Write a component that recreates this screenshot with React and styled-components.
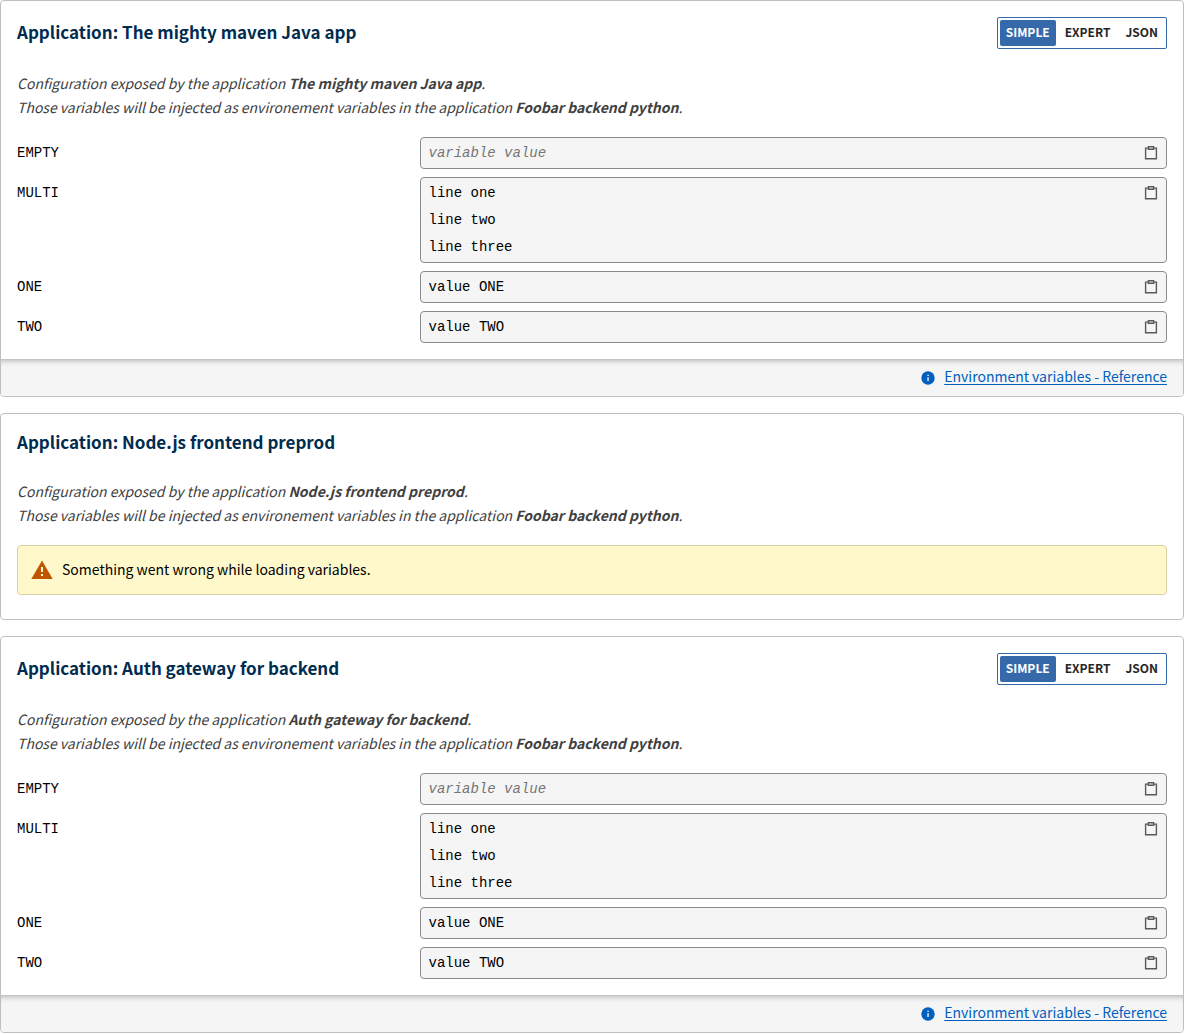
import React, { useId, useState } from 'react';
import styled, { createGlobalStyle } from 'styled-components';

const SANS = '"Noto Sans CJK JP", "Noto Sans", sans-serif';
const MONO = '"Liberation Mono", "DejaVu Sans Mono", monospace';

const GlobalStyle = createGlobalStyle`
  *, *::before, *::after { box-sizing: border-box; }
  body {
    margin: 0;
    background: #fff;
    color: #000;
    font-family: ${SANS};
    font-size: 14px;
    line-height: 24px;
  }
`;

const Page = styled.main`
  display: flex;
  flex-direction: column;
  gap: 16px;
`;

const Card = styled.section`
  border: 1px solid #bfbfbf;
  border-radius: 4px;
  background: #fff;
  overflow: hidden;
`;

const CardBody = styled.div`
  display: flex;
  flex-direction: column;
  padding: 16px;
  padding-bottom: ${(p) => (p.$roomy ? 24 : 16)}px;
`;

const CardHeader = styled.header`
  display: flex;
  align-items: center;
  justify-content: space-between;
  flex-wrap: wrap;
  gap: 8px 16px;
  margin-bottom: 22px;
`;

const Title = styled.h2`
  margin: 0;
  padding-bottom: 3px;
  color: #002c4f;
  font-size: 17px;
  font-weight: 700;
  line-height: 24px;
`;

const Description = styled.p`
  margin: 0 0 18px;
  color: #404040;
  font-style: italic;
`;

const ToggleGroup = styled.fieldset`
  display: flex;
  gap: 3px;
  min-width: 0;
  margin: 0;
  padding: 2px;
  border: 1px solid #3569aa;
  border-radius: 2px;
`;

const ToggleLabel = styled.label`
  display: block;
  padding: 0 6px 2px;
  border-radius: 2px;
  background: ${(p) => (p.$selected ? '#3569aa' : 'transparent')};
  color: ${(p) => (p.$selected ? '#fff' : '#262626')};
  font-size: 12px;
  font-weight: 700;
  line-height: 24px;
  text-transform: uppercase;
  cursor: pointer;

  &:focus-within { outline: 2px solid #002c4f; }
`;

const HiddenRadio = styled.input`
  position: absolute;
  width: 1px;
  height: 1px;
  margin: 0;
  opacity: 0;
  appearance: none;
`;

const VariableList = styled.div`
  display: flex;
  flex-direction: column;
  gap: 8px;
`;

const VariableRow = styled.div`
  display: grid;
  grid-template-columns: 35% 65%;
  align-items: start;
`;

const VariableName = styled.label`
  padding-top: 4px;
  font-family: ${MONO};
  font-size: 14px;
  line-height: 24px;
`;

const Field = styled.div`
  display: flex;
  align-items: flex-start;
  border: 1px solid #8c8c8c;
  border-radius: 4px;
  background: #f5f5f5;
`;

const TextInput = styled.input`
  flex: 1;
  min-width: 0;
  height: 30px;
  padding: 0 8px;
  border: 0;
  background: none;
  color: #000;
  font-family: ${MONO};
  font-size: 14px;

  &::placeholder { color: #757575; font-style: italic; opacity: 1; }
`;

const TextArea = styled.textarea`
  flex: 1;
  display: block;
  min-width: 0;
  height: 84px;
  padding: 2px 8px 1px;
  border: 0;
  background: none;
  color: #000;
  font-family: ${MONO};
  font-size: 14px;
  line-height: 27px;
  resize: none;
  overflow: hidden;
`;

const CopyButton = styled.button`
  display: flex;
  align-items: center;
  justify-content: center;
  width: 30px;
  height: 30px;
  padding: 0;
  border: 0;
  background: none;
  color: #595959;
  cursor: pointer;
`;

const CardFooter = styled.footer`
  display: flex;
  justify-content: flex-end;
  padding: 4px 16px 8px;
  background: #f5f5f5;
  box-shadow: inset 0 6px 6px -6px #a4a4a4;
  border-top: 1px solid #c4c4c4;
`;

const DocLink = styled.a`
  display: flex;
  align-items: center;
  gap: 8px;
  color: #0060bf;
  text-decoration: none;
`;

const DocLinkText = styled.span`
  text-decoration: underline;
  text-underline-offset: 2px;
`;

const Notice = styled.div`
  display: flex;
  align-items: center;
  gap: 8px;
  min-height: 50px;
  padding: 0 12px;
  border: 1px solid #dbd2a3;
  border-radius: 4px;
  background: #fff8cb;
`;

const NoticeText = styled.span`
  padding-bottom: 2px;
`;

const ClipboardIcon = () => (
  <svg width="14" height="16" viewBox="0 0 14 16" fill="none" stroke="currentColor" aria-hidden="true">
    <path d="M4.2 3.1H1.6v10.6h10.8V3.1H9.8" strokeWidth="1.4" />
    <path d="M4.4 1.8h5.2v2.4H4.4z" strokeWidth="1.4" />
  </svg>
);

const InfoIcon = () => (
  <svg width="16" height="20" viewBox="0 0 16 20" aria-hidden="true">
    <circle cx="8" cy="12" r="6.7" fill="#0060bf" />
    <path d="M7.4 8.7h1.3V10H7.4zM7.4 11.2h1.3V15H7.4z" fill="#fff" />
  </svg>
);

const WarningIcon = () => (
  <svg width="24" height="24" viewBox="0 0 24 24" aria-hidden="true">
    <path d="M12 2.4 22.7 21H1.3z" fill="#c05600" />
    <path d="M11 9h2v5h-2zM11 16h2v2h-2z" fill="#fff8cb" />
  </svg>
);

const MODES = ['Simple', 'Expert', 'JSON'];

const VARIABLES = [
  { name: 'EMPTY', value: '' },
  { name: 'MULTI', value: 'line one\nline two\nline three' },
  { name: 'ONE', value: 'value ONE' },
  { name: 'TWO', value: 'value TWO' },
];

function ModeToggle() {
  const group = useId();
  const [mode, setMode] = useState('Simple');
  return (
    <ToggleGroup aria-label="Mode">
      {MODES.map((m) => (
        <ToggleLabel key={m} $selected={m === mode}>
          <HiddenRadio type="radio" name={group} checked={m === mode} onChange={() => setMode(m)} />
          {m}
        </ToggleLabel>
      ))}
    </ToggleGroup>
  );
}

function Variable({ name, value }) {
  const id = useId();
  return (
    <VariableRow>
      <VariableName htmlFor={id}>{name}</VariableName>
      <Field>
        {value.includes('\n') ? (
          <TextArea id={id} rows={3} readOnly value={value} />
        ) : (
          <TextInput id={id} type="text" readOnly value={value} placeholder="variable value" />
        )}
        <CopyButton type="button" aria-label={`Copy ${name}`} onClick={() => navigator.clipboard?.writeText(value)}>
          <ClipboardIcon />
        </CopyButton>
      </Field>
    </VariableRow>
  );
}

function ConfigCard({ app, failed }) {
  return (
    <Card>
      <CardBody $roomy={failed}>
        <CardHeader>
          <Title>Application: {app}</Title>
          {!failed && <ModeToggle />}
        </CardHeader>
        <Description>
          Configuration exposed by the application <strong>{app}</strong>.<br />
          Those variables will be injected as environement variables in the application{' '}
          <strong>Foobar backend python</strong>.
        </Description>
        {failed ? (
          <Notice role="alert">
            <WarningIcon />
            <NoticeText>Something went wrong while loading variables.</NoticeText>
          </Notice>
        ) : (
          <VariableList>
            {VARIABLES.map((v) => (
              <Variable key={v.name} {...v} />
            ))}
          </VariableList>
        )}
      </CardBody>
      {!failed && (
        <CardFooter>
          <DocLink href="#reference">
            <InfoIcon />
            <DocLinkText>Environment variables - Reference</DocLinkText>
          </DocLink>
        </CardFooter>
      )}
    </Card>
  );
}

export default function App() {
  return (
    <>
      <GlobalStyle />
      <Page>
        <ConfigCard app="The mighty maven Java app" />
        <ConfigCard app="Node.js frontend preprod" failed />
        <ConfigCard app="Auth gateway for backend" />
      </Page>
    </>
  );
}
